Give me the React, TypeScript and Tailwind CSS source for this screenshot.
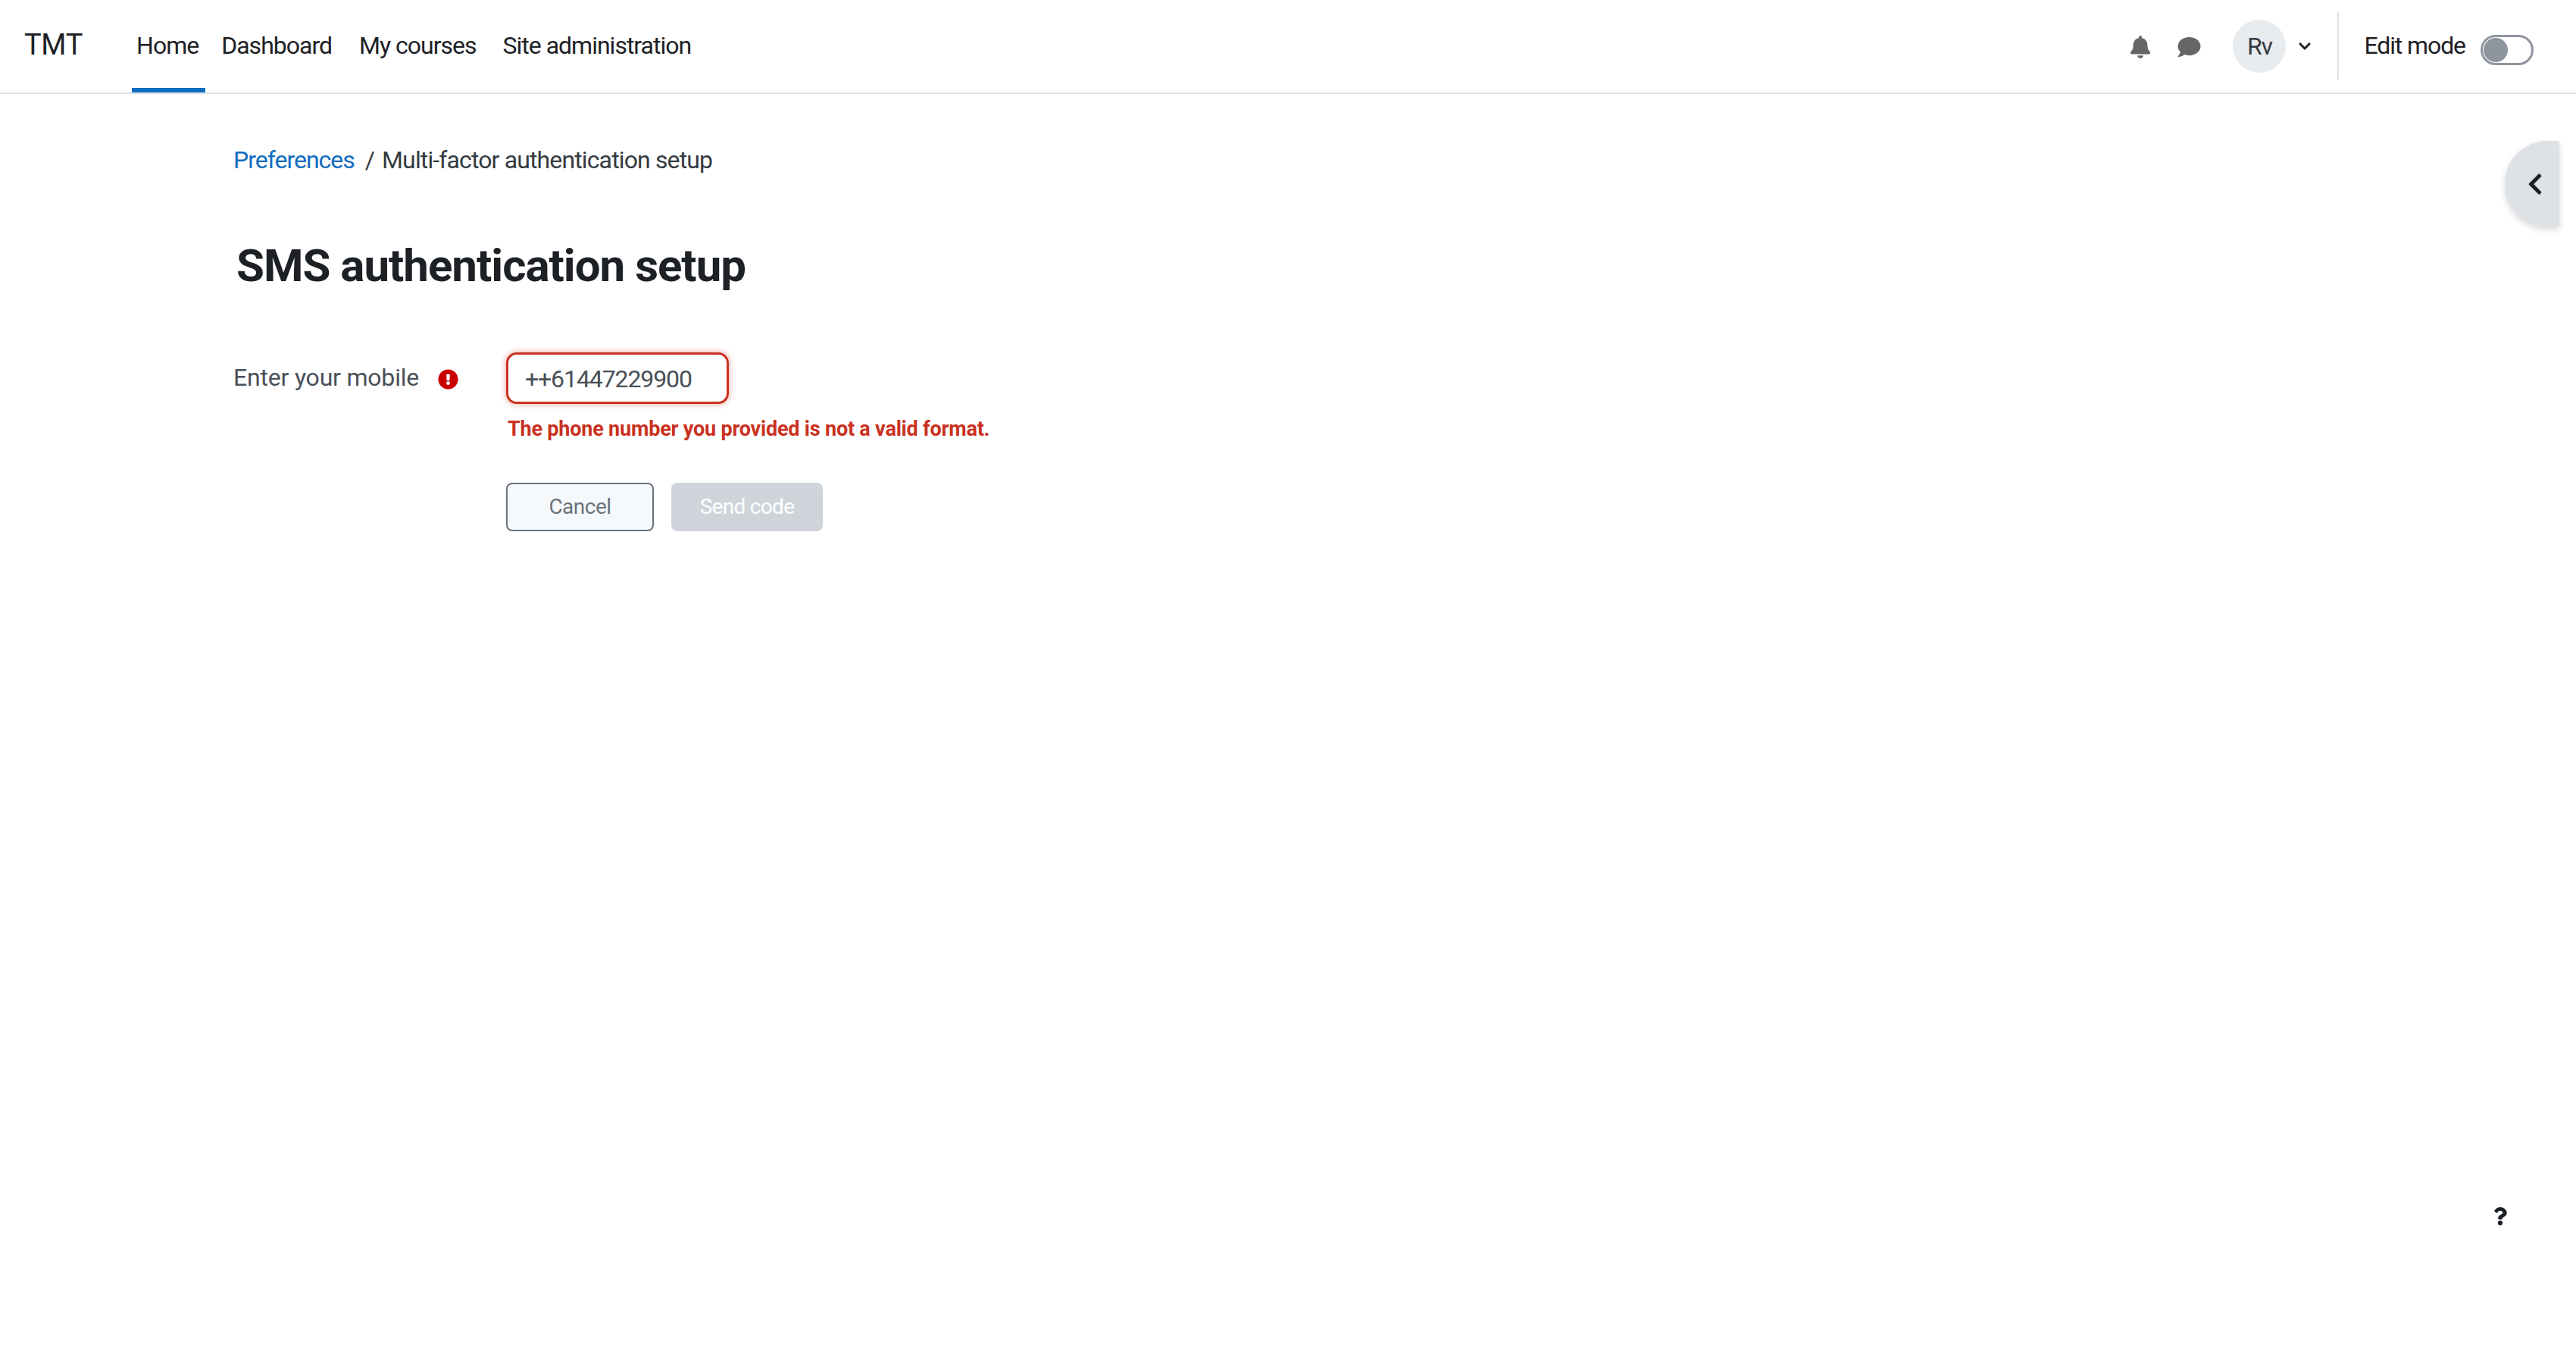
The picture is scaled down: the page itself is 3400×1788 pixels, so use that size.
import { FaBell, FaChevronDown, FaChevronLeft, FaComment, FaExclamationCircle, FaQuestion } from "react-icons/fa";

const NAV_ITEMS = [
  { label: "Home", className: "ml-[65px] pl-[6px] pr-[9px] border-[#0f6cbf]" },
  { label: "Dashboard", className: "ml-[10px] px-[11px] border-transparent" },
  { label: "My courses", className: "ml-[15px] px-[10px] border-transparent" },
  { label: "Site administration", className: "ml-[15px] px-[10px] border-transparent" },
];

function Header() {
  return (
    <header className="flex h-[124px] items-stretch border-b-2 border-[#dee2e6] bg-white text-[#1d2125]">
      <a className="ml-[32px] self-center pb-[4px] text-[38px] leading-none tracking-[-0.3px]">TMT</a>
      <nav className="flex items-stretch tracking-[-1px]">
        {NAV_ITEMS.map((item) => (
          <a key={item.label} className={`flex items-center border-b-[6px] pt-[8px] pb-[4px] text-[32px] ${item.className}`}>
            {item.label}
          </a>
        ))}
      </nav>
      <div className="ml-auto flex items-center">
        <FaBell className="mt-[2px] h-[30px] w-[28px] text-[#666666]" />
        <FaComment className="mt-[2px] ml-[35px] h-[30px] w-[31px] text-[#666666]" />
        <div className="ml-[42px] flex h-[70px] w-[70px] items-center justify-center rounded-full bg-[#e9ecef] text-[32px] tracking-[-1.1px] text-[#343a40]">Rv</div>
        <FaChevronDown className="ml-[16px] h-[18px] w-[18px]" />
        <div className="ml-[34px] h-[90px] w-[2px] bg-[#dee2e6]" />
        <span className="ml-[33px] pb-[2px] text-[32px] tracking-[-1.1px]">Edit mode</span>
        <div className="mr-[56px] ml-[20px] mt-[10px] flex h-[40px] w-[70px] items-center rounded-full border-[3px] border-[#8f959e] bg-white pl-[1px]">
          <div className="h-[32px] w-[32px] rounded-full bg-[#8f959e]" />
        </div>
      </div>
    </header>
  );
}

function PhoneForm() {
  return (
    <form className="mt-[78px] flex">
      <div className="flex w-[360px] items-start pt-[15px]">
        <label className="text-[32px] leading-[36px] tracking-[-0.2px] text-[#495057]">Enter your mobile</label>
        <FaExclamationCircle className="mt-[7px] ml-[25px] h-[27px] w-[27px] text-[#ca0000]" />
      </div>
      <div>
        <div className="flex h-[68px] w-[294px] items-center rounded-[14px] border-[3px] border-[#ca3120] bg-white pt-[1px] pl-[22px] text-[32px] tracking-[-1.1px] text-[#495057] shadow-[0_0_6px_2px_rgba(202,49,32,0.3)]">
          ++61447229900
        </div>
        <div className="mt-[17px] pl-[2px] text-[27px] leading-[32px] font-bold tracking-[-0.2px] text-[#ca3120]">
          The phone number you provided is not a valid format.
        </div>
        <div className="mt-[55px] flex gap-[23px]">
          <button type="button" className="h-[64px] w-[195px] rounded-[8px] border-2 border-[#6a737b] bg-[#f5f9fc] text-[28px] tracking-[-0.5px] text-[#6a737b]">
            Cancel
          </button>
          <button type="button" className="h-[64px] w-[200px] rounded-[8px] bg-[#ced4da] text-[28px] tracking-[-0.7px] text-white">
            Send code
          </button>
        </div>
      </div>
    </form>
  );
}

export default function App() {
  return (
    <div className="relative min-h-screen overflow-hidden bg-white font-['Roboto',sans-serif]">
      <Header />
      <main className="pl-[308px]">
        <div className="mt-[63px] flex text-[32px] leading-[48px] text-[#343a40]">
          <a className="tracking-[-1px] text-[#0f6cbf]">Preferences</a>
          <span className="ml-[14px]">/</span>
          <span className="ml-[9px] tracking-[-0.87px]">Multi-factor authentication setup</span>
        </div>
        <h2 className="mt-[80px] pl-[4px] text-[60px] leading-[72px] font-bold tracking-[-1px] text-[#1d2125]">SMS authentication setup</h2>
        <PhoneForm />
      </main>
      <button type="button" className="absolute top-[186px] right-[22px] flex h-[113px] w-[72px] items-center justify-center rounded-l-[56px] bg-[#dee2e6] pl-[8px] text-[#1d2125] shadow-[0_4px_8px_rgba(0,0,0,0.15)]">
        <FaChevronLeft className="h-[32px] w-[22px]" />
      </button>
      <FaQuestion className="absolute top-[1590px] left-[3291px] h-[30px] w-[18px] text-[#1d2125]" />
    </div>
  );
}
